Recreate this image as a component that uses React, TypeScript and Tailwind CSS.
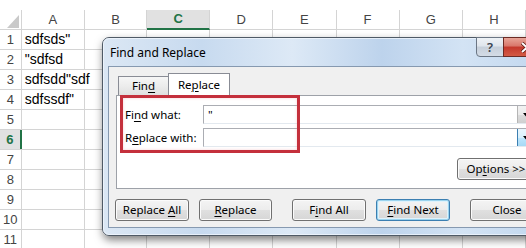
import React from 'react';

const cols: { l: string; w: string }[] = [
  { l: 'A', w: 'w-[64px]' },
  { l: 'B', w: 'w-[63px]' },
  { l: 'C', w: 'w-[64px]' },
  { l: 'D', w: 'w-[64px]' },
  { l: 'E', w: 'w-[64px]' },
  { l: 'F', w: 'w-[64px]' },
  { l: 'G', w: 'w-[64px]' },
  { l: 'H', w: 'w-[64px]' },
];

const data: Record<number, string> = {
  1: 'sdfsds"',
  2: '"sdfsd',
  3: 'sdfsdd"sdf',
  4: 'sdfssdf"',
};

const U = ({ c }: { c: string }) => <span className="underline underline-offset-[2px] decoration-[1px]">{c}</span>;

const btn =
  'h-[22px] rounded-[3px] border border-[#707070] bg-[linear-gradient(180deg,#f4f4f4_0%,#ececec_50%,#e0e0e0_50%,#d6d6d6_100%)] shadow-[inset_0_0_0_1px_#fbfbfb] flex items-center justify-center text-[11.5px] text-black leading-none';

function Sheet() {
  const rows = Array.from({ length: 11 }, (_, i) => i + 1);
  return (
    <div className="flex flex-col" style={{ fontFamily: '"Liberation Sans", Arial, sans-serif' }}>
      <div className="h-[10px]" />
      <div className="flex h-[20px] border-b border-[#d4d4d4]">
        <div className="w-[22px] border-r border-[#d4d4d4] relative">
          <svg className="absolute left-[7px] top-[5px]" width="12" height="13" viewBox="0 0 12 13">
            <polygon points="12,0 12,13 0,13" fill="#c9c9c9" />
          </svg>
        </div>
        {cols.map((c) =>
          c.l === 'C' ? (
            <div
              key={c.l}
              className={`${c.w} border-r border-[#d4d4d4] bg-[#e1e1e1] border-b-[2px] border-b-[#217346] -mb-[1px] flex items-center justify-center text-[13px] font-bold text-[#217346]`}
            >
              {c.l}
            </div>
          ) : (
            <div
              key={c.l}
              className={`${c.w} border-r border-[#d4d4d4] flex items-center justify-center text-[13px] text-[#444]`}
            >
              {c.l}
            </div>
          )
        )}
      </div>
      {rows.map((r) => (
        <div key={r} className="flex h-[20px] border-b border-[#d4d4d4]">
          {r === 6 ? (
            <div className="w-[22px] border-r-[2px] border-[#217346] bg-[#e1e1e1] text-center text-[13px] font-bold text-[#217346] leading-[19px]">
              {r}
            </div>
          ) : (
            <div className="w-[22px] border-r border-[#d4d4d4] text-center text-[13px] text-[#444] leading-[19px]">{r}</div>
          )}
          {cols.map((c, i) => (
            <div
              key={c.l}
              className={`${c.w} border-r ${i === 0 && r === 3 ? 'border-r-transparent' : 'border-[#d4d4d4]'} pl-[3px] text-[14px] text-black leading-[19px] whitespace-nowrap overflow-visible`}
            >
              {i === 0 ? data[r] ?? '' : ''}
            </div>
          ))}
        </div>
      ))}
    </div>
  );
}

function Combo({ value, hot }: { value?: string; hot?: boolean }) {
  return (
    <div className="flex-1 h-[19px] border border-[#abadb3] border-b-[#e3e9ef] border-r-[#dbdfe6] bg-white flex items-stretch">
      <div className="flex-1 pl-[4px] text-[11.5px] leading-[17px] text-black">{value}</div>
      <div
        className={
          hot
            ? 'w-[17px] border-l border-[#3c7fb1] bg-[linear-gradient(180deg,#eaf6fd_0%,#d9f0fc_50%,#bee6fd_50%,#a7d9f5_100%)] flex items-center justify-center'
            : 'w-[17px] border-l border-[#b5b5b5] bg-[linear-gradient(180deg,#f2f2f2_0%,#ebebeb_50%,#dddddd_50%,#cfcfcf_100%)] flex items-center justify-center'
        }
      >
        <svg width="7" height="4" viewBox="0 0 7 4">
          <polygon points="0,0 7,0 3.5,4" fill="#000" />
        </svg>
      </div>
    </div>
  );
}

function Dialog() {
  return (
    <div
      className="absolute left-[102px] top-[37px] w-[452px] h-[199px] rounded-l-[7px] border border-[#4f5a66] bg-[linear-gradient(90deg,#dbe7f4_0%,#c7daef_22%,#dde9f6_42%,#bdd3ec_62%,#d3e3f4_80%,#c0d6ee_100%)] shadow-[1px_4px_9px_rgba(0,0,0,0.5)] flex flex-col"
      style={{ fontFamily: '"Noto Sans", "Open Sans", sans-serif' }}
    >
      <div className="absolute inset-0 rounded-l-[6px] border border-[#f3f8fd]/70 pointer-events-none" />
      {/* title bar */}
      <div className="h-[28px] pl-[7px] pt-[1px] flex items-center text-[12px] text-black relative">Find and Replace</div>
      {/* caption buttons */}
      <div className="absolute -top-[1px] left-[373px] w-[28px] h-[20px] rounded-bl-[4px] border border-[#6b7684] bg-[linear-gradient(180deg,#eef2f6_0%,#dfe5ec_45%,#c6cfda_50%,#d4dce6_100%)] flex items-center justify-center text-[13px] font-semibold text-[#3a4450] leading-none">
        ?
      </div>
      <div className="absolute -top-[1px] left-[400px] w-[44px] h-[20px] border border-[#6b2a24] bg-[linear-gradient(180deg,#e8a598_0%,#d9766a_45%,#c4382c_50%,#d35a45_100%)] flex items-center">
        <svg className="ml-[17px]" width="12" height="11" viewBox="0 0 12 11">
          <path d="M1 1 L11 10 M11 1 L1 10" stroke="#5a1a14" strokeWidth="3.5" />
          <path d="M1 1 L11 10 M11 1 L1 10" stroke="#ffffff" strokeWidth="2" />
        </svg>
      </div>
      {/* client */}
      <div className="mx-[5px] h-[162px] border border-[#8699b0] bg-[#f0f0f0] flex flex-col">
        <div className="mt-[6px] h-[23px] flex items-end pl-[9px] relative z-10">
          <div className="w-[51px] h-[19px] mb-[1px] border border-b-0 border-[#898c95] bg-[linear-gradient(180deg,#f6f6f6_0%,#ececec_50%,#e0e0e0_100%)] flex items-center justify-center text-[11.5px] text-black">
            <span>
              Fin<U c="d" />
            </span>
          </div>
          <div className="-ml-[1px] w-[62px] h-[23px] border border-b-0 border-[#898c95] bg-white flex items-center justify-center text-[11.5px] text-black pb-[1px]">
            <span>
              Re<U c="p" />lace
            </span>
          </div>
        </div>
        <div className="-mt-[1px] mx-[7px] h-[94px] border border-[#9da1a8] bg-white relative pt-[9px] pl-[8px] pr-[4px] flex flex-col">
          <div className="absolute left-[3px] -top-[1px] w-[180px] h-[58px] border-[3px] border-[#c4303c] z-20 shadow-[inset_0_0_3px_rgba(230,120,130,0.35)]" />
          <div className="flex items-center h-[19px]">
            <div className="w-[78px] text-[11.5px] text-black">
              Fi<U c="n" />d what:
            </div>
            <Combo value={'"'} />
          </div>
          <div className="flex items-center h-[19px] mt-[4px]">
            <div className="w-[78px] text-[11.5px] text-black">
              R<U c="e" />place with:
            </div>
            <Combo hot />
          </div>
          <div className="mt-[11px] flex justify-end">
            <div className={`${btn} w-[78px] h-[21px]`}>
              <span>
                Op<U c="t" />ions &gt;&gt;
              </span>
            </div>
          </div>
        </div>
        <div className="mt-[10px] flex pl-[6px]">
          <div className={`${btn} w-[74px]`}>
            <span>
              Replace <U c="A" />ll
            </span>
          </div>
          <div className={`${btn} w-[73px] ml-[10px]`}>
            <span>
              <U c="R" />eplace
            </span>
          </div>
          <div className={`${btn} w-[74px] ml-[20px]`}>
            <span>
              F<U c="i" />nd All
            </span>
          </div>
          <div
            className={`h-[22px] rounded-[3px] border border-[#3c7fb1] bg-[linear-gradient(180deg,#f4f4f4_0%,#ececec_50%,#e0e0e0_50%,#d6d6d6_100%)] shadow-[inset_0_0_0_1px_#9ad3ee,inset_0_0_0_2px_#dff2fb] flex items-center justify-center text-[11.5px] text-black leading-none w-[74px] ml-[10px]`}
          >
            <span>
              <U c="F" />ind Next
            </span>
          </div>
          <div className={`${btn} w-[74px] ml-[20px]`}>Close</div>
        </div>
      </div>
    </div>
  );
}

export default function App() {
  return (
    <div className="w-[526px] h-[248px] relative overflow-hidden bg-white">
      <Sheet />
      <Dialog />
    </div>
  );
}
